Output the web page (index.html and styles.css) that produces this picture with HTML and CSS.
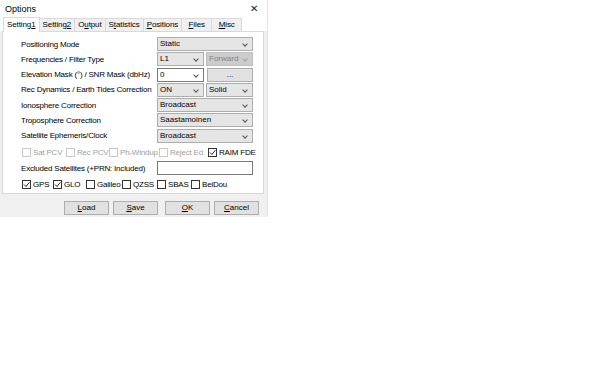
FILE: index.html
```html
<!DOCTYPE html>
<html lang="en">
<head>
    <meta charset="UTF-8">
    <title>Options</title>
    <link rel="stylesheet" href="styles.css">
</head>
<body>
    <div class="dialog">
        <div class="titlebar">
            <span class="title">Options</span>
            <span class="close">&#x2715;</span>
        </div>

        <div class="tabs">
            <div class="tab active">Setting<u>1</u></div>
            <div class="tab">Setting<u>2</u></div>
            <div class="tab">O<u>u</u>tput</div>
            <div class="tab">S<u>t</u>atistics</div>
            <div class="tab"><u>P</u>ositions</div>
            <div class="tab"><u>F</u>iles</div>
            <div class="tab"><u>M</u>isc</div>
        </div>

        <div class="panel">
            <div class="row">
                <label>Positioning Mode</label>
                <div class="ctrls">
                    <div class="combo wide">Static</div>
                </div>
            </div>
            <div class="row">
                <label>Frequencies / Filter Type</label>
                <div class="ctrls">
                    <div class="combo">L1</div>
                    <div class="combo disabled">Forward</div>
                </div>
            </div>
            <div class="row">
                <label>Elevation Mask (°) / SNR Mask (dbHz)</label>
                <div class="ctrls">
                    <div class="combo edit">0</div>
                    <div class="btn dots">...</div>
                </div>
            </div>
            <div class="row">
                <label>Rec Dynamics / Earth Tides Correction</label>
                <div class="ctrls">
                    <div class="combo">ON</div>
                    <div class="combo">Solid</div>
                </div>
            </div>
            <div class="row">
                <label>Ionosphere Correction</label>
                <div class="ctrls">
                    <div class="combo wide">Broadcast</div>
                </div>
            </div>
            <div class="row">
                <label>Troposphere Correction</label>
                <div class="ctrls">
                    <div class="combo wide">Saastamoinen</div>
                </div>
            </div>
            <div class="row">
                <label>Satellite Ephemeris/Clock</label>
                <div class="ctrls">
                    <div class="combo wide">Broadcast</div>
                </div>
            </div>

            <div class="checks opts">
                <span class="chk off sat">Sat PCV</span>
                <span class="chk off rec">Rec PCV</span>
                <span class="chk off ph">Ph-Windup</span>
                <span class="chk off rej">Reject Ed</span>
                <span class="chk on">RAIM FDE</span>
            </div>

            <div class="row excl">
                <label>Excluded Satellites (+PRN: Included)</label>
                <div class="ctrls">
                    <div class="textbox"></div>
                </div>
            </div>

            <div class="checks gnss">
                <span class="chk on gps">GPS</span>
                <span class="chk on glo">GLO</span>
                <span class="chk gal">Galileo</span>
                <span class="chk qzs">QZSS</span>
                <span class="chk sbs">SBAS</span>
                <span class="chk">BeiDou</span>
            </div>
        </div>

        <div class="buttons">
            <div class="btn"><u>L</u>oad</div>
            <div class="btn"><u>S</u>ave</div>
            <div class="btn gap"><u>O</u>K</div>
            <div class="btn"><u>C</u>ancel</div>
        </div>
    </div>
</body>
</html>
```

FILE: styles.css
```css
* {
    margin: 0;
    padding: 0;
    box-sizing: border-box;
}

body {
    background: #fff;
    font-family: 'Liberation Sans', Arial, sans-serif;
    font-size: 8px;
    color: #000;
    white-space: nowrap;
}

.dialog {
    width: 268px;
    height: 217px;
    background: #f0f0f0;
    border-right: 1px solid #e3e3e3;
}

.titlebar {
    height: 17px;
    background: #fff;
    display: flex;
    justify-content: space-between;
    align-items: center;
    padding: 0 9px 0 5px;
}

.title {
    font-size: 9px;
}

.close {
    font-size: 10px;
    color: #222;
}

.tabs {
    display: flex;
    height: 14px;
    padding-left: 4px;
    background: #fff;
    align-items: flex-end;
}

.tab {
    height: 13px;
    line-height: 12px;
    min-width: 31px;
    text-align: center;
    padding: 0 3px;
    border: 1px solid #d9d9d9;
    border-bottom: none;
    margin-left: -1px;
    background: #f0f0f0;
    letter-spacing: -0.1px;
}

.tab.active {
    height: 15px;
    line-height: 14px;
    background: #fff;
    position: relative;
    z-index: 1;
    margin-bottom: -1px;
    padding: 0 3px;
}

.tab u, .btn u {
    text-decoration: underline;
    text-underline-offset: 1px;
}

.panel {
    width: 262px;
    margin-left: 2px;
    height: 163px;
    background: #fff;
    border: 1px solid #d9d9d9;
    padding: 5px 0 0 18px;
    display: flex;
    flex-direction: column;
    gap: 1.3px;
}

.row {
    display: flex;
    align-items: center;
    height: 14px;
}

.row label {
    width: 136px;
    flex: none;
    letter-spacing: -0.2px;
}

.ctrls {
    display: flex;
    gap: 2px;
    width: 96px;
}

.combo {
    position: relative;
    width: 47px;
    height: 14px;
    line-height: 12px;
    padding-left: 2px;
    background: #e5e5e5;
    border: 1px solid #adadad;
}

.combo.wide {
    width: 96px;
}

.combo::after {
    content: "";
    position: absolute;
    right: 5px;
    top: 4px;
    width: 3px;
    height: 3px;
    border-right: 1px solid #555;
    border-bottom: 1px solid #555;
    transform: rotate(45deg);
}

.combo.edit {
    background: #fff;
    border-color: #7a7a7a;
}

.combo.disabled {
    background: #ccc;
    border-color: #bfbfbf;
    color: #838383;
}

.combo.disabled::after {
    border-color: #a0a0a0;
}

.btn {
    height: 14px;
    line-height: 12px;
    text-align: center;
    background: #e1e1e1;
    border: 1px solid #adadad;
}

.btn.dots {
    width: 46px;
    margin-left: 1px;
}

.checks {
    display: flex;
    align-items: center;
    height: 14px;
    margin-left: 1px;
}

.chk {
    display: flex;
    align-items: center;
    gap: 2px;
    flex: none;
    letter-spacing: -0.2px;
}

.chk::before {
    content: "";
    flex: none;
    width: 9px;
    height: 9px;
    border: 1px solid #333;
    background: #fff;
    box-sizing: border-box;
}

.chk.on::before {
    background: #fff url("data:image/svg+xml;utf8,<svg xmlns='http://www.w3.org/2000/svg' width='7' height='7'><path d='M1 3.5 L3 5.5 L6.3 1.3' fill='none' stroke='%23222' stroke-width='1'/></svg>") center no-repeat;
}

.chk.off {
    color: #a0a0a0;
}

.chk.off::before {
    border-color: #c8c8c8;
}

.opts {
    margin-top: 1px;
}

.opts .sat { width: 44px; }
.opts .rec { width: 43px; }
.opts .ph { width: 50px; }
.opts .rej { width: 49px; }

.excl {
    margin-top: 1px;
}

.textbox {
    width: 97px;
    height: 14px;
    background: #fff;
    border: 1px solid #7a7a7a;
}

.gnss {
    margin-top: 1px;
}

.gnss .gps { width: 31px; }
.gnss .glo { width: 33px; }
.gnss .gal { width: 36px; }
.gnss .qzs { width: 35px; }
.gnss .sbs { width: 34px; }

.buttons {
    display: flex;
    gap: 4px;
    padding: 7px 0 0 64px;
}

.buttons .btn {
    width: 45px;
    height: 14px;
}

.buttons .btn.gap {
    margin-left: 3px;
}
```
